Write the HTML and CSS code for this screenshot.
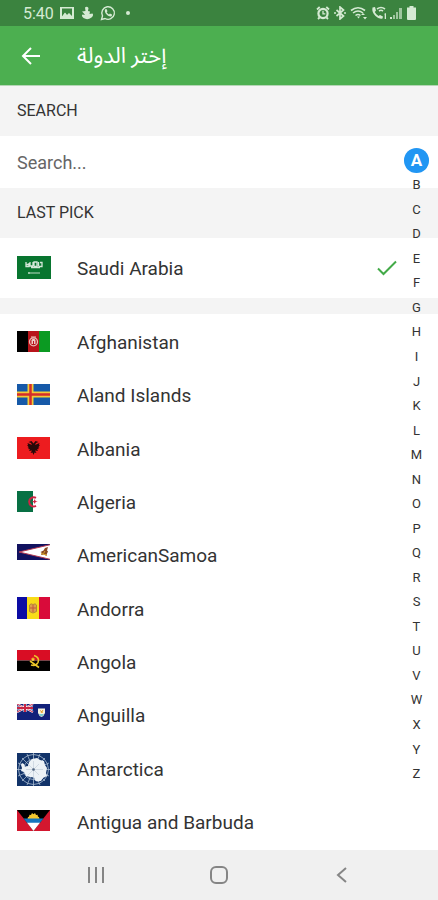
FILE: index.html
```
<!DOCTYPE html>
<html lang="en">
<head>
  <meta charset="UTF-8">
  <meta name="viewport" content="width=device-width, initial-scale=1.0">
  <title>إختر الدولة</title>
  <link rel="stylesheet" href="styles.css">
</head>
<body>
  <!-- Status bar -->
  <div class="status-bar">
    <div class="status-left">
      <span class="time">5:40</span>
      <svg width="14" height="14" viewBox="0 0 14 14"><path fill="currentColor" fill-rule="evenodd" d="M0 1h14v12H0zM2 2.500v8l3-4 2 2.500 2-2 3 3v-7.500z"/><path fill="currentColor" d="M1 12l4-5 2 2.500 2-2 4 4.500z"/></svg>
      <svg width="14" height="14" viewBox="0 0 14 14"><path fill="currentColor" d="M5 1.500Q7 0 8.500 2L8 5l2 .5L9.500 8l3-.5q1.500 2-1 4-4 3-8 .5Q1 10 2.500 8.500L5 9 3.500 7 2 5.500 5.500 5z"/></svg>
      <svg width="16" height="16" viewBox="0 0 16 16"><path fill="none" stroke="currentColor" stroke-width="1.400" d="M1.500 14.500l1-3.600A6.300 6.300 0 1 1 5 13.500z"/><path fill="currentColor" d="M5.200 4.300l1.300-.2 1 2.200-.8 1c.6 1.100 1.300 1.700 2.300 2.200l.9-.9 2.100 1-.2 1.300c-1.400 1.200-3.300.4-4.900-1.100C5.200 8.200 4.200 6 5.200 4.300z"/></svg>
      <span class="dot"></span>
    </div>
    <div class="status-right">
      <svg width="14" height="14" viewBox="0 0 14 14"><path fill="none" stroke="currentColor" stroke-width="1.800" d="M1 3.500L3.700 1M13 3.500L10.300 1M3.500 11.500L2 13M10.500 11.500L12 13"/><circle cx="7" cy="7.500" r="4.600" fill="none" stroke="currentColor" stroke-width="2.200"/><path fill="none" stroke="currentColor" stroke-width="1.300" d="M7 4.800v3h2.300"/></svg>
      <svg width="14" height="14" viewBox="0 0 14 14"><path fill="none" stroke="currentColor" stroke-width="1.700" d="M3.500 4l7 6L7 13V1l3.500 3-7 6"/><circle cx="2" cy="7" r="1" fill="currentColor"/><circle cx="12" cy="7" r="1" fill="currentColor"/></svg>
      <svg width="18" height="14" viewBox="0 0 18 14"><path fill="none" stroke="currentColor" stroke-width="1.600" d="M1 4.500q7-5.500 14 0M3 7q5-4 10 0M5.500 9.500q2.500-2 5 0"/><path fill="currentColor" d="M7 10.500h3l-1.500 2zM11 9l2-2 2 2zM13 11h4l-2 2.500z"/></svg>
      <svg width="16" height="14" viewBox="0 0 16 14"><path fill="currentColor" d="M1.500 1.500l2.500-.5L5 4.500 3.800 6q1.200 2.500 3.700 4L9 9l3 1.500-.5 2Q8 13.500 4.500 10 .5 6 1.500 1.500zM13 8l2-1v6h-1.300V8.500z"/><path fill="none" stroke="currentColor" stroke-width="1.600" d="M6 3q4-3 8 0M8 5q2-1.500 4 0"/></svg>
      <svg width="13" height="14" viewBox="0 0 13 14"><path fill="currentColor" d="M0 11h2v2H0z"/><path fill="currentColor" opacity=".65" d="M3 9h2v4H3zM6 6h2v7H6zM9 2h3v11H9z"/></svg>
      <svg width="11" height="14" viewBox="0 0 11 14"><path fill="currentColor" d="M3.500 0h4v1.500H10V13q0 1-1 1H2q-1 0-1-1V1.500h2.500z"/></svg>
    </div>
  </div>

  <header class="app-bar">
    <button class="back" type="button" aria-label="Back">
      <svg width="20" height="20" viewBox="0 0 20 20" fill="none" stroke="currentColor" stroke-width="2"><path d="M19 10H2.500M10 2l-8 8 8 8"/></svg>
    </button>
    <h1 dir="rtl" lang="ar">إختر الدولة</h1>
  </header>

  <main>
    <h2 class="section-title"><label for="search">SEARCH</label></h2>
    <input class="search" id="search" type="text" placeholder="Search...">

    <h2 class="section-title">LAST PICK</h2>
    <button class="country last-pick" type="button">
      <span class="flag">
        <svg width="34" height="23" viewBox="0 0 34 23"><path fill="#08752f" d="M0 0h34v23H0z"/><path fill="none" stroke="#d5e8da" stroke-width="1.300" d="M9 6v4.500h3V7M13 6v4h3V6M17 10V6h3v4.500h-3M21.500 6v4.500M23 6.500h2v4h-3M9.500 8.500h4M14 11.500h9"/><path stroke="#b9dcc3" stroke-width="1.200" d="M11 17h12M12 16v2"/></svg>
      </span>
      <span class="name">Saudi Arabia</span>
      <svg class="check" width="20" height="16" viewBox="0 0 20 16" fill="none" stroke="currentColor" stroke-width="2"><path d="M1 8.500l5.500 5.500L19 1.500"/></svg>
    </button>
    <div class="divider"></div>

    <!-- Country list -->
    <ul class="countries">
      <li><button class="country" type="button">
        <span class="flag">
          <svg width="33" height="21" viewBox="0 0 33 21"><path d="M0 0h11v21H0z"/><path fill="#b8141b" d="M11 0h11v21H11z"/><path fill="#0b9a22" d="M22 0h11v21H22z"/><circle cx="16.500" cy="10.800" r="4" fill="none" stroke="#e9b9b5" stroke-width="1.300"/><path fill="#f0cbc7" d="M14.500 9q2-2.500 4 0v4h-4zM14 5.500h5v1h-5z"/><path fill="#b8141b" d="M16 10h1v3h-1z"/></svg>
        </span>
        <span class="name">Afghanistan</span>
      </button></li>
      <li><button class="country" type="button">
        <span class="flag">
          <svg width="33" height="21" viewBox="0 0 33 21"><path fill="#1659a8" d="M0 0h33v21H0z"/><path stroke="#f4ca35" stroke-width="6" d="M13.500 0v21M0 10.500h33"/><path stroke="#d52d2a" stroke-width="2.500" d="M13.500 0v21M0 10.500h33"/></svg>
        </span>
        <span class="name">Aland Islands</span>
      </button></li>
      <li><button class="country" type="button">
        <span class="flag">
          <svg width="33" height="22" viewBox="0 0 33 22"><path fill="#ed1c1f" d="M0 0h33v22H0z"/><path fill="#260909" d="M16.500 6.500L14.500 4l-3 1 2.500 1 1 2-4.500-2 .5 2-1 .2 1.500 1.300-1 .5 1.500 1-1 1 2 .3-1 1.700 3-.5-1.500 2.500 2-.5 1 2.500 1-2.500 2 .5-1.500-2.500 3 .5-1-1.700 2-.3-1-1 1.500-1-1-.5L23 8.200l-1-.2.500-2L18 8l1-2 2.500-1-3-1z"/></svg>
        </span>
        <span class="name">Albania</span>
      </button></li>
      <li><button class="country" type="button">
        <span class="flag">
          <svg width="33" height="21" viewBox="0 0 33 21"><path fill="#fff" d="M16 0h17v21H16z"/><path fill="#087044" d="M0 0h16v21H0z"/><path fill="none" stroke="#cf2343" stroke-width="2" d="M19 6.800a4.600 4.600 0 1 0 0 8"/><path fill="#cf2343" d="M14.500 10.700l2.300-.8 1-2 .8 2 2.200.6-2.200.6-.8 2-1-1.800z"/></svg>
        </span>
        <span class="name">Algeria</span>
      </button></li>
      <li><button class="country" type="button">
        <span class="flag">
          <svg width="33" height="16" viewBox="0 0 33 16"><path fill="#11125f" d="M0 0h33v16H0z"/><path fill="#fff" stroke="#b73b52" d="M34 .5L2 8l32 7.500z"/><path fill="#8a4a22" d="M31 3l-3 1-1.500 2.500-3 1.500 1.500 1-1 2 3-.5 2.500 1.500.5-2.500 1-2-1-1z"/><path stroke="#dda629" d="M24 9.500l6 1.500M28 7l-1.500 2.500" fill="none"/></svg>
        </span>
        <span class="name">AmericanSamoa</span>
      </button></li>
      <li><button class="country" type="button">
        <span class="flag">
          <svg width="33" height="22" viewBox="0 0 33 22"><path fill="#0c0ca4" d="M0 0h11v22H0z"/><path fill="#f8dc18" d="M10 0h12v22H10z"/><path fill="#d90b3a" d="M22 0h11v22H22z"/><path fill="#dca14c" stroke="#b78734" d="M12.500 8q1.500-2 3.500-.5 2.500-1.500 3.500.5v6.500L16 16l-3.500-1.500z"/><path stroke="#c3573c" d="M16 8v7M13 11h6"/></svg>
        </span>
        <span class="name">Andorra</span>
      </button></li>
      <li><button class="country" type="button">
        <span class="flag">
          <svg width="33" height="21" viewBox="0 0 33 21"><path fill="#d90d24" d="M0 0h33v10.500H0z"/><path d="M0 10.500h33V21H0z"/><path fill="none" stroke="#eac529" stroke-width="1.600" d="M17 5.500q6 2 4 7-2 4-7 2.500M13 11l9 6.500"/><path fill="#f3cf2c" d="M16 7l.7 1.500 1.600.2-1.200 1.100.3 1.600-1.400-.8-1.400.8.300-1.600-1.200-1.100 1.600-.2z"/></svg>
        </span>
        <span class="name">Angola</span>
      </button></li>
      <li><button class="country" type="button">
        <span class="flag">
          <svg width="33" height="16" viewBox="0 0 33 16"><path fill="#12217a" d="M0 0h33v16H0z"/><path stroke="#fff" stroke-width="2" d="M0 0l16 8M16 0L0 8"/><path stroke="#c92543" d="M0 0l16 8M16 0L0 8"/><path stroke="#fff" stroke-width="3" d="M8 0v8M0 4h16"/><path stroke="#c92543" stroke-width="2" d="M8 0v8M0 4h16"/><path fill="#f6f2dc" d="M21 4.500h7V9q-1 3-3.500 4Q22 12 21 9z"/><path fill="#76c9cf" d="M22 10h5q-1 2-2.500 2.500Q22.500 12 22 10z"/><path fill="none" stroke="#e6a22c" d="M23 6.500l3 2M26 6l-2 3"/></svg>
        </span>
        <span class="name">Anguilla</span>
      </button></li>
      <li><button class="country" type="button">
        <span class="flag">
          <svg width="33" height="33" viewBox="0 0 33 33"><path fill="#123369" d="M0 0h33v33H0z"/><g fill="none" stroke="#a9bdd2" stroke-width=".8"><circle cx="16.500" cy="16.500" r="15"/><circle cx="16.500" cy="16.500" r="10"/><path d="M16.500 0v33M0 16.500h33M5 5l23 23M28 5L5 28M10 1l13 31M23 1L10 32M1 10l31 13M1 23l31-13"/></g><path fill="#edf2f6" d="M5 10l2 1 1 3 3-1 1-4 3-3 5-1 3 2 4 1 1 4 2 3-1 5 1 3-4 2-2 3-4 .5-2-1-1-3-4-.5-4-1-2-4-3-1 1-3-1-3z"/><path fill="none" stroke="#c9d3de" stroke-width=".8" d="M16.500 8v16M9 16.500h17M11 11l11 11M22 11L11 22"/><circle cx="16.500" cy="16.500" r="1.300" fill="#536681"/></svg>
        </span>
        <span class="name">Antarctica</span>
      </button></li>
      <li><button class="country" type="button">
        <span class="flag">
          <svg width="33" height="21" viewBox="0 0 33 21"><path fill="#d3172f" d="M0 0h33v21H0z"/><path d="M0 0h33L16.500 21z"/><path fill="#f4c72f" d="M10.500 9l.5-2 1-.3.500-2 1.500.3 1-2 1.500 1.300L18 3l1 2 1.500-.3.500 2 1 .3.500 2z"/><path fill="#1375bd" d="M6.500 8.500h20L22.800 13H10.200z"/><path fill="#fff" d="M10 12.800h13L16.500 21z"/></svg>
        </span>
        <span class="name">Antigua and Barbuda</span>
      </button></li>
    </ul>
  </main>

  <!-- A to Z quick scroll -->
  <nav class="letters" aria-label="Alphabet">
    <a class="active" href="#A">A</a>
    <a href="#B">B</a>
    <a href="#C">C</a>
    <a href="#D">D</a>
    <a href="#E">E</a>
    <a href="#F">F</a>
    <a href="#G">G</a>
    <a href="#H">H</a>
    <a href="#I">I</a>
    <a href="#J">J</a>
    <a href="#K">K</a>
    <a href="#L">L</a>
    <a href="#M">M</a>
    <a href="#N">N</a>
    <a href="#O">O</a>
    <a href="#P">P</a>
    <a href="#Q">Q</a>
    <a href="#R">R</a>
    <a href="#S">S</a>
    <a href="#T">T</a>
    <a href="#U">U</a>
    <a href="#V">V</a>
    <a href="#W">W</a>
    <a href="#X">X</a>
    <a href="#Y">Y</a>
    <a href="#Z">Z</a>
  </nav>

  <footer class="nav-bar">
    <button type="button" aria-label="Recent apps">
      <svg width="18" height="18" viewBox="0 0 18 18" stroke="currentColor" stroke-width="2"><path d="M2 1v16M9 1v16M16 1v16"/></svg>
    </button>
    <button type="button" aria-label="Home">
      <svg width="20" height="20" viewBox="0 0 20 20" fill="none" stroke="currentColor" stroke-width="2"><rect x="2" y="2" width="16" height="16" rx="5"/></svg>
    </button>
    <button type="button" aria-label="Back">
      <svg width="18" height="18" viewBox="0 0 18 18" fill="none" stroke="currentColor" stroke-width="2"><path d="M13 2L5 9l8 7"/></svg>
    </button>
  </footer>
</body>
</html>
```
FILE: styles.css
```
* {
  box-sizing: border-box;
  margin: 0;
  padding: 0;
}
body {
  position: relative;
  display: flex;
  flex-direction: column;
  min-height: 100vh;
  background-color: #fff;
  color: #333;
  font-family: Roboto, "Noto Sans", sans-serif;
}
svg {
  display: block;
  flex-shrink: 0;
}
button {
  border: none;
  background: none;
  color: inherit;
  font-family: inherit;
  cursor: pointer;
}

/* Status bar */
.status-bar {
  display: flex;
  justify-content: space-between;
  align-items: center;
  height: 26px;
  padding: 0 21px 0 23px;
  background-color: #3b833f;
  color: #d5ead3;
}
.status-left,
.status-right {
  display: flex;
  align-items: center;
}
.status-left {
  gap: 6px;
}
.status-right {
  gap: 3px;
}
.time {
  font-size: 16px;
}
.dot {
  width: 4px;
  height: 4px;
  margin-left: 4px;
  border-radius: 50%;
  background-color: currentColor;
}

/* App bar */
.app-bar {
  display: flex;
  align-items: center;
  gap: 36px;
  height: 60px;
  padding: 0 21px;
  background-color: #4caf50;
  border-bottom: 1px solid #b5d6b6;
  color: #fff;
}
.app-bar h1 {
  font-family: Roboto, "Noto Sans Arabic", "Noto Sans", "DejaVu Sans", sans-serif;
  font-size: 22px;
  font-weight: 400;
}

main {
  flex: 1;
  display: flex;
  flex-direction: column;
}
.section-title {
  height: 50px;
  padding: 0 17px;
  background-color: #f4f4f4;
  font-size: 16px;
  font-weight: 400;
  line-height: 50px;
}
.search {
  width: 100%;
  height: 52px;
  padding: 0 17px;
  border: none;
  outline: none;
  font-family: inherit;
  font-size: 18px;
}
.search::placeholder {
  color: #666;
}
.divider {
  height: 16px;
  background-color: #f4f4f4;
}

/* Country rows */
.countries {
  flex: 1;
  display: flex;
  flex-direction: column;
  padding: 2px 0 1px;
  list-style: none;
}
.countries li {
  flex: 1;
  display: flex;
}
.country {
  display: flex;
  align-items: center;
  width: 100%;
  min-height: 52px;
  padding: 0 41px 0 17px;
  font-size: 19px;
  text-align: left;
}
.last-pick {
  min-height: 60px;
}
.flag {
  width: 60px;
  min-height: 24px;
}
.name {
  flex: 1;
}
.check {
  color: #43aa48;
}

/* Alphabet index */
.letters {
  position: absolute;
  top: 148px;
  right: 9px;
  bottom: 114px;
  display: flex;
  flex-direction: column;
  width: 25px;
}
.letters a {
  flex: 1;
  display: flex;
  justify-content: center;
  align-items: center;
  color: #333;
  font-size: 13px;
  text-decoration: none;
}
.letters .active {
  border-radius: 50%;
  background-color: #2196f3;
  color: #fff;
  font-size: 17px;
  font-weight: 700;
}

/* Navigation bar */
.nav-bar {
  display: flex;
  justify-content: space-around;
  align-items: center;
  height: 50px;
  padding: 0 35px;
  background-color: #f0f0f0;
  color: #858585;
}
.nav-bar button {
  padding: 10px;
}
```
